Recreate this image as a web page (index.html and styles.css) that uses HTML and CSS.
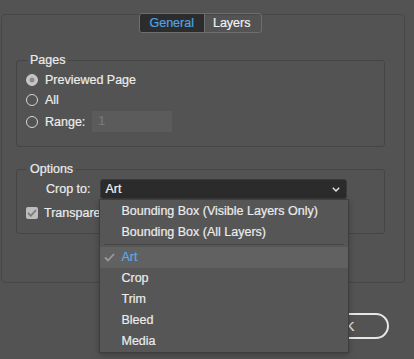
FILE: index.html
```html
<!DOCTYPE html>
<html lang="en">
<head>
    <meta charset="UTF-8">
    <meta name="viewport" content="width=device-width, initial-scale=1.0">
    <title>Export Options</title>
    <link rel="stylesheet" href="styles.css">
</head>
<body>
    <div class="panel">
        <div class="tabs">
            <span class="tab active">General</span>
            <span class="tab">Layers</span>
        </div>

        <div class="group pages">
            <div class="group-title">Pages</div>
            <label class="row"><span class="radio checked"></span>Previewed Page</label>
            <label class="row"><span class="radio"></span>All</label>
            <label class="row range-row"><span class="radio"></span>Range:<span class="range-input">1</span></label>
        </div>

        <div class="group options">
            <div class="group-title">Options</div>
            <div class="row crop-row">
                <span class="crop-label">Crop to:</span>
                <div class="select-wrap">
                    <div class="select">
                        <span>Art</span>
                        <svg class="chevron" width="8" height="5" viewBox="0 0 8 5"><polyline points="0.8,0.8 4,4 7.2,0.8" fill="none" stroke="#e8e8e8" stroke-width="1.4"/></svg>
                    </div>
                    <ul class="menu">
                        <li>Bounding Box (Visible Layers Only)</li>
                        <li>Bounding Box (All Layers)</li>
                        <li class="sep"></li>
                        <li class="current">
                            <svg class="tick" width="11" height="9" viewBox="0 0 11 9"><polyline points="1,4.5 4,7.5 10,1" fill="none" stroke="#9a9a9a" stroke-width="1.8"/></svg>
                            Art
                        </li>
                        <li>Crop</li>
                        <li>Trim</li>
                        <li>Bleed</li>
                        <li>Media</li>
                    </ul>
                </div>
            </div>
            <label class="row check-row">
                <span class="checkbox">
                    <svg width="10" height="8" viewBox="0 0 10 8"><polyline points="1,4 3.8,6.8 9,1" fill="none" stroke="#7b7b7b" stroke-width="1.8"/></svg>
                </span>
                Transparent Background
            </label>
        </div>
    </div>

    <div class="buttons">
        <button class="btn">OK</button>
    </div>
</body>
</html>
```

FILE: styles.css
```css
html, body { min-height: 100%; }
body {
    margin: 0;
    min-height: 359px;
    background: #535353;
    color: #ececec;
    font-family: "Liberation Sans", Arial, sans-serif;
    font-size: 12.5px;
    -webkit-text-stroke: 0.2px;
}
.panel {
    margin: 14px 9px 0 1px;
    padding: 0 19px 48px 14px;
    border: 1px solid #474747;
    border-radius: 4px;
}
.tabs {
    display: flex;
    width: fit-content;
    margin: -2px auto 0;
    border: 1px solid #6e6e6e;
    border-radius: 3px;
    overflow: hidden;
}
.tab {
    height: 18px;
    line-height: 18px;
    padding: 0 10px 0 8px;
    color: #f2f2f2;
}
.tab.active {
    background: #2c2c2c;
    color: #4fa3e3;
    border-right: 1px solid #6e6e6e;
    padding: 0 10px 0 9px;
}
.group {
    border: 1px solid #454545;
    border-radius: 3px;
}
.pages { margin-top: 27px; padding-bottom: 14px; }
.options { margin-top: 22px; padding-bottom: 10px; }
.group-title {
    width: fit-content;
    margin: -9px 0 2px 10px;
    padding: 0 3px;
    line-height: 16px;
    background: #535353;
}
.row {
    display: flex;
    align-items: center;
    height: 20px;
    padding-left: 9px;
}
.range-row { height: 21px; margin-top: 1px; }
.radio {
    box-sizing: border-box;
    width: 12px;
    height: 12px;
    margin-right: 7px;
    border: 1.3px solid #d6d6d6;
    border-radius: 50%;
}
.radio.checked {
    background: radial-gradient(circle, #8a8a8a 0 2.2px, #c6c6c6 2.8px);
    border-color: #c6c6c6;
}
.range-input {
    width: 80px;
    height: 21px;
    margin-left: 7px;
    padding-left: 6px;
    box-sizing: border-box;
    line-height: 21px;
    background: #5b5b5b;
    color: #7a7a7a;
}
.crop-row { padding-left: 29px; }
.crop-label { margin-right: 10px; }
.select-wrap { position: relative; }
.select {
    box-sizing: border-box;
    display: flex;
    align-items: center;
    justify-content: space-between;
    width: 247px;
    height: 20px;
    padding: 0 6px 0 4px;
    background: #2b2b2b;
    border: 1px solid #3a3a3a;
    border-radius: 3px;
    color: #f2f2f2;
}
.chevron { margin-top: 1px; }
.check-row { height: 20px; margin-top: 4px; }
.checkbox {
    display: flex;
    align-items: center;
    justify-content: center;
    width: 12px;
    height: 12px;
    margin-right: 6px;
    background: #bdbdbd;
    border-radius: 2px;
}
.menu {
    position: absolute;
    top: 100%;
    left: -1px;
    z-index: 2;
    width: 248px;
    margin: 0;
    padding: 1px 0 0;
    list-style: none;
    background: #565656;
    border: 1px solid #3e3e3e;
    box-shadow: 0 2px 6px rgba(0,0,0,0.25);
}
.menu li {
    position: relative;
    height: 21px;
    line-height: 21px;
    padding-left: 21px;
    color: #ececec;
}
.menu li.sep {
    height: 1px;
    margin: 1px 4px 2px;
    padding: 0;
    background: #474747;
}
.menu li.current {
    background: #616161;
    color: #5aaae6;
}
.tick {
    position: absolute;
    left: 4px;
    top: 6px;
}
.buttons {
    display: flex;
    justify-content: flex-end;
    margin-top: 30px;
    padding-right: 25px;
}
.btn {
    width: 88px;
    height: 26px;
    background: transparent;
    border: 2px solid #e6e6e6;
    border-radius: 13px;
    color: #e6e6e6;
    font: inherit;
    font-size: 13px;
}
```
